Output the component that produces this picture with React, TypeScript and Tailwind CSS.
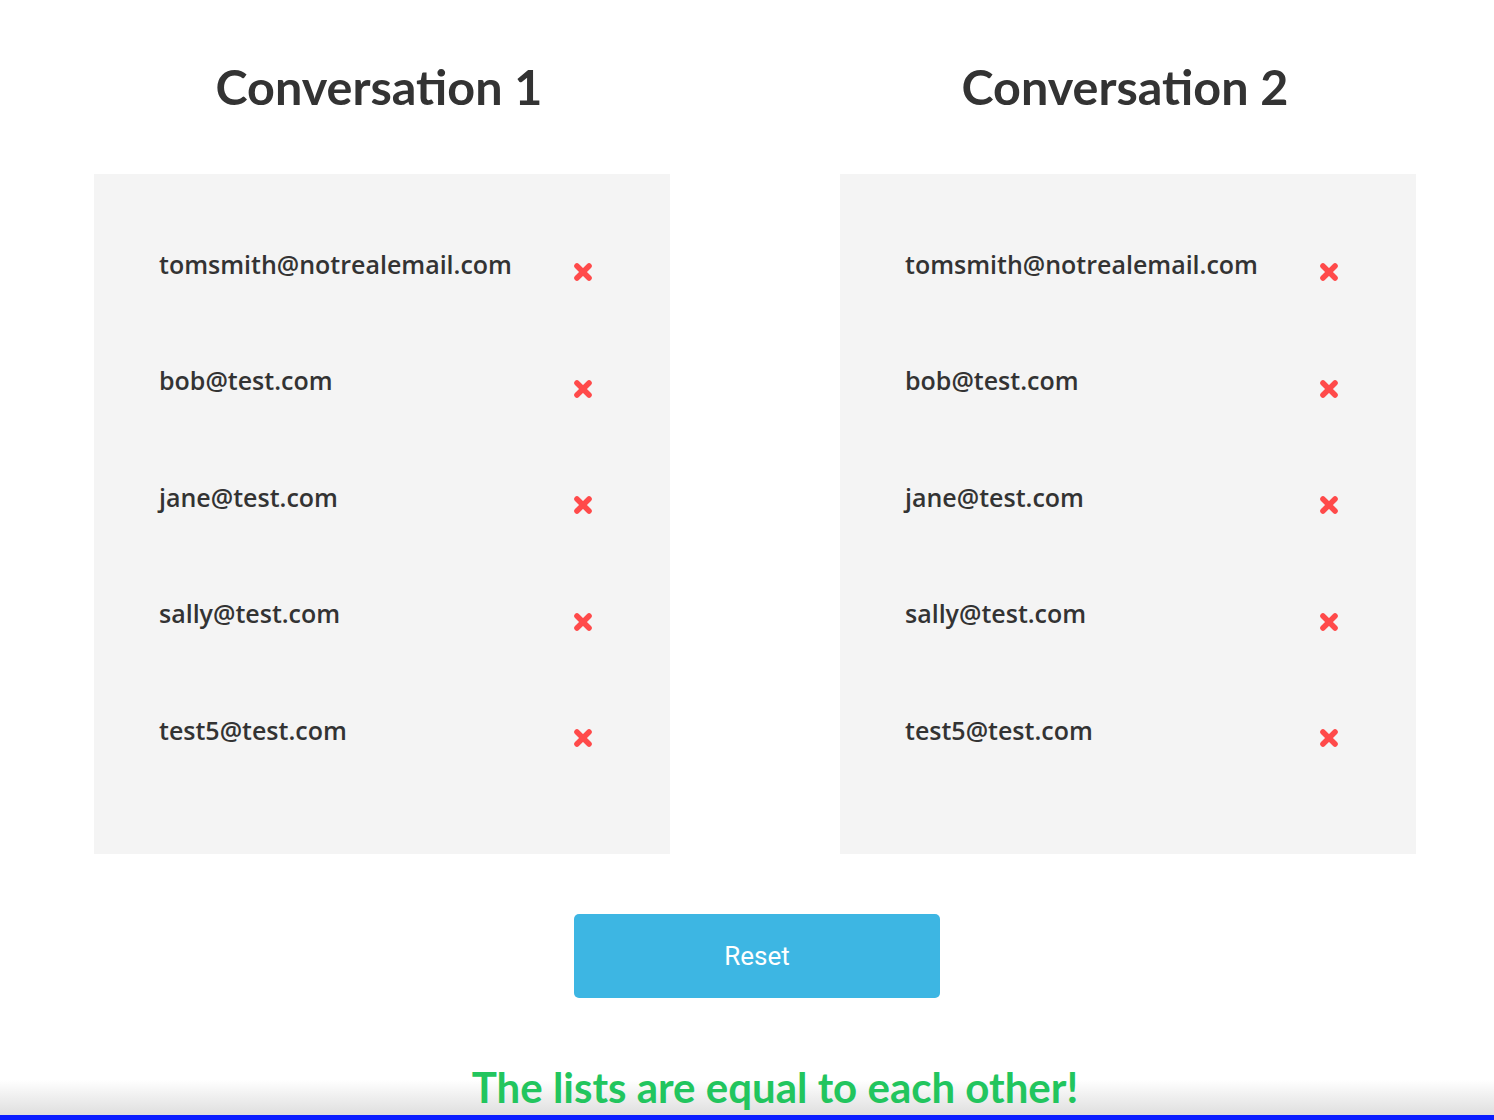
import React from 'react';

const emails = [
  'tomsmith@notrealemail.com',
  'bob@test.com',
  'jane@test.com',
  'sally@test.com',
  'test5@test.com',
];

const RemoveIcon: React.FC = () => (
  <svg viewBox="0 0 20 20" className="w-[22px] h-[22px]" aria-hidden>
    <path
      d="M4.5 4.5 L15.5 15.5 M15.5 4.5 L4.5 15.5"
      stroke="#ff4a4a"
      strokeWidth="5"
      strokeLinecap="round"
      fill="none"
    />
  </svg>
);

const Conversation: React.FC<{ title: string }> = ({ title }) => (
  <div className="w-[576px] flex flex-col">
    <h1 className="h-[174px] flex items-center justify-center pb-[2px] pr-[6px] font-['Lato',sans-serif] font-bold text-[48.5px] text-[#333333]">
      {title}
    </h1>
    <div className="h-[680px] bg-[#f4f4f4] pt-[36px] pl-[65px] pr-[76px]">
      {emails.map((email) => (
        <div key={email} className="h-[116.5px] flex items-center justify-between">
          <span className="font-['Open_Sans',sans-serif] font-semibold text-[25px] text-[#333333] -mt-[8px]">
            {email}
          </span>
          <button className="p-0 bg-transparent mt-[8px]">
            <RemoveIcon />
          </button>
        </div>
      ))}
    </div>
  </div>
);

export default function App() {
  return (
    <div className="relative h-[1120px] w-full overflow-hidden bg-white">
      <div className="absolute bottom-0 left-0 right-0 h-[40px] bg-gradient-to-b from-white to-[#dadada]" />
      <div className="absolute bottom-0 left-0 right-0 h-[5px] bg-[#0a1dff]" />
      <div className="relative flex gap-[170px] pl-[94px]">
        <Conversation title="Conversation 1" />
        <Conversation title="Conversation 2" />
      </div>
      <div className="relative flex justify-center pt-[60px] pl-[20px]">
        <button className="w-[366px] h-[84px] rounded-[5px] bg-[#3db6e3] text-white text-[26px] font-['Roboto',sans-serif]">
          Reset
        </button>
      </div>
      <p className="relative mt-[64px] pl-[56px] text-center font-['Lato',sans-serif] font-bold text-[42px] leading-[50px] text-[#22c55e]">
        The lists are equal to each other!
      </p>
    </div>
  );
}
